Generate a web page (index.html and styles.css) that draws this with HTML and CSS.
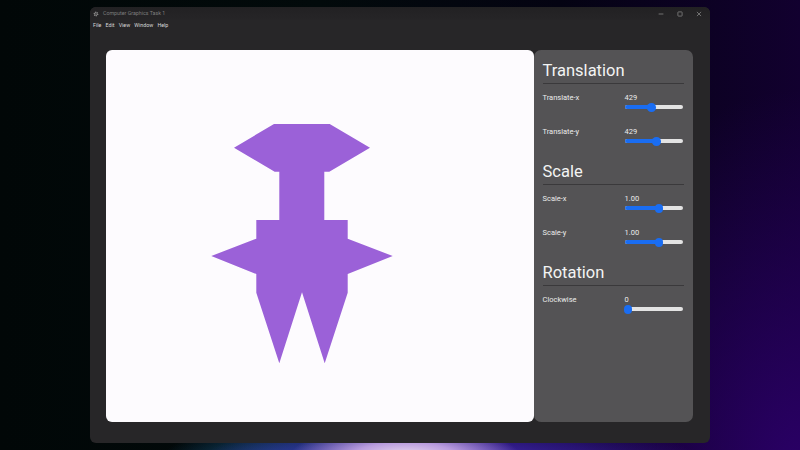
FILE: index.html
```html
<!DOCTYPE html>
<html>
<head>
<meta charset="utf-8">
<link rel="stylesheet" href="styles.css">
</head>
<body>
<div class="desktop">
  <div class="window">
    <div class="titlebar">
      <svg class="app-icon" width="6" height="6" viewBox="0 0 12 12">
        <circle cx="6" cy="6" r="3.6" fill="none" stroke="#8c8c8c" stroke-width="2.4" stroke-dasharray="2 1.4"/>
        <circle cx="6" cy="6" r="2.6" fill="none" stroke="#8c8c8c" stroke-width="1.4"/>
      </svg>
      <span class="title">Computer Graphics Task 1</span>
      <div class="controls">
        <svg width="6" height="6" viewBox="0 0 10 10"><line x1="1" y1="5" x2="9" y2="5" stroke="#8e8e8e" stroke-width="1.2"/></svg>
        <svg width="6" height="6" viewBox="0 0 10 10"><rect x="1.5" y="1.5" width="7" height="7" rx="1" fill="none" stroke="#8e8e8e" stroke-width="1.2"/></svg>
        <svg width="6" height="6" viewBox="0 0 10 10"><path d="M1.5 1.5 L8.5 8.5 M8.5 1.5 L1.5 8.5" stroke="#8e8e8e" stroke-width="1.2"/></svg>
      </div>
    </div>
    <div class="menubar">
      <span>File</span><span>Edit</span><span>View</span><span>Window</span><span>Help</span>
    </div>
    <div class="content">
      <div class="canvas">
        <svg width="428" height="372" viewBox="0 0 428 372">
          <polygon fill="#9b61d8" points="168,74 223.7,74 264,97.7 223.3,121.7 218.3,121.7 218.3,170 241.7,170 241.7,188.7 286.7,206 241.7,224 241.7,242.7 218.7,313.3 196,242.3 173.3,313.3 150.3,242.7 150.3,224 105.3,206 150.3,188.7 150.3,170 173.3,170 173.3,121.7 168.7,121.7 128,97.7"/>
        </svg>
      </div>
      <div class="panel">
        <section class="group first">
          <h2>Translation</h2>
          <div class="row">
            <span class="label">Translate-x</span>
            <div class="ctrl">
              <span class="value">429</span>
              <div class="slider"><div class="track"><div class="fill" style="width:27px"></div></div><div class="thumb" style="left:27px"></div></div>
            </div>
          </div>
          <div class="row">
            <span class="label">Translate-y</span>
            <div class="ctrl">
              <span class="value">429</span>
              <div class="slider"><div class="track"><div class="fill" style="width:32px"></div></div><div class="thumb" style="left:32px"></div></div>
            </div>
          </div>
        </section>
        <section class="group">
          <h2>Scale</h2>
          <div class="row">
            <span class="label">Scale-x</span>
            <div class="ctrl">
              <span class="value">1.00</span>
              <div class="slider"><div class="track"><div class="fill" style="width:34.7px"></div></div><div class="thumb" style="left:34.7px"></div></div>
            </div>
          </div>
          <div class="row">
            <span class="label">Scale-y</span>
            <div class="ctrl">
              <span class="value">1.00</span>
              <div class="slider"><div class="track"><div class="fill" style="width:34.7px"></div></div><div class="thumb" style="left:34.7px"></div></div>
            </div>
          </div>
        </section>
        <section class="group">
          <h2>Rotation</h2>
          <div class="row">
            <span class="label">Clockwise</span>
            <div class="ctrl">
              <span class="value">0</span>
              <div class="slider"><div class="track"><div class="fill" style="width:3px"></div></div><div class="thumb" style="left:3.5px"></div></div>
            </div>
          </div>
        </section>
      </div>
    </div>
  </div>
</div>
</body>
</html>
```

FILE: styles.css
```css
* { box-sizing: border-box; }
html, body { margin: 0; padding: 0; }
body {
  width: 800px;
  height: 450px;
  overflow: hidden;
  font-family: Roboto, "Liberation Sans", sans-serif;
  background:
    radial-gradient(ellipse 115px 30px at 405px 456px, rgba(240,225,240,1), rgba(200,170,230,0.9) 45%, rgba(140,100,220,0) 100%),
    radial-gradient(ellipse 250px 45px at 450px 462px, rgba(75,45,200,1), rgba(60,30,170,0.6) 60%, rgba(50,20,150,0) 100%),
    radial-gradient(ellipse 140px 40px at 300px 462px, rgba(30,110,170,0.9), rgba(10,40,80,0) 100%),
    radial-gradient(ellipse 260px 380px at 800px 470px, #2a0066, rgba(30,0,80,0) 100%),
    linear-gradient(to right, #010707 0%, #020a0b 40%, #040312 70%, #12002f 100%);
}
.desktop {
  padding: 7px 0 0 90px;
}
.window {
  width: 620px;
  height: 436px;
  background: #272628;
  border-radius: 6px;
  display: flex;
  flex-direction: column;
}
.titlebar {
  height: 13px;
  display: flex;
  align-items: center;
  padding: 0 8px 0 3px;
  background: linear-gradient(#222123, #262527);
  border-radius: 6px 6px 0 0;
}
.app-icon { flex: none; }
.title {
  margin-left: 4px;
  font-size: 5.3px;
  color: #7d7d7d;
  line-height: 1;
}
.controls {
  margin-left: auto;
  display: flex;
  gap: 13px;
  align-items: center;
}
.controls svg { display: block; }
.menubar {
  height: 11px;
  display: flex;
  align-items: center;
  gap: 4.2px;
  padding-left: 3px;
  font-size: 5.3px;
  color: #d9d9d9;
  line-height: 1;
}
.content {
  flex: 1;
  display: flex;
  padding: 19px 17px 21px 16px;
}
.canvas {
  width: 427.5px;
  background: #fdfbfe;
  border-radius: 6px;
  overflow: hidden;
}
.canvas svg { display: block; }
.panel {
  flex: 1;
  background: #545355;
  border-radius: 7px;
  padding: 13px 9px 0 9px;
  color: #ececec;
}
.group { display: flex; flex-direction: column; }
.group + .group { margin-top: 18.5px; }
h2 {
  margin: 0;
  font-weight: 400;
  font-size: 16.5px;
  line-height: 1;
  color: #f3f3f3;
  padding-bottom: 3.7px;
  border-bottom: 1px solid #3a393b;
}
.row {
  display: flex;
  margin-top: 16.9px;
}
h2 + .row { margin-top: 10px; }
.label {
  width: 82px;
  font-size: 7.5px;
  line-height: 1;
  color: #ebebeb;
}
.ctrl {
  display: flex;
  flex-direction: column;
}
.value {
  font-size: 7.5px;
  line-height: 1;
  color: #ebebeb;
}
.slider {
  position: relative;
  width: 58px;
  height: 8px;
  margin-top: 1.7px;
}
.track {
  position: absolute;
  left: 0;
  right: 0;
  top: 2px;
  height: 4px;
  border-radius: 2px;
  background: #e3e3e3;
  overflow: hidden;
}
.fill {
  height: 100%;
  background: #1a6df2;
}
.thumb {
  position: absolute;
  top: -0.25px;
  width: 8.5px;
  height: 8.5px;
  margin-left: -4.25px;
  border-radius: 50%;
  background: #1a6df2;
}
```
